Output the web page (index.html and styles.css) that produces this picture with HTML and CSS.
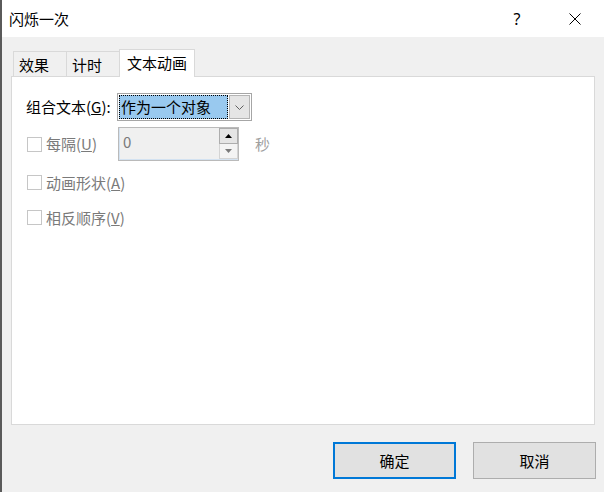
FILE: index.html
```html
<!DOCTYPE html>
<html lang="zh-CN">
<head>
<meta charset="utf-8">
<title>闪烁一次</title>
<link rel="stylesheet" href="styles.css">
</head>
<body>
<div class="window">
  <div class="titlebar">
    <div class="title">闪烁一次</div>
    <div class="cap-btn help">?</div>
    <div class="cap-btn close">
      <svg width="12" height="12" viewBox="0 0 12 12"><path d="M0.5 0.5 L11.5 11.5 M11.5 0.5 L0.5 11.5" stroke="#000" stroke-width="1" fill="none"/></svg>
    </div>
  </div>
  <div class="content">
    <div class="tabs">
      <div class="tab tab-1">效果</div>
      <div class="tab tab-2">计时</div>
      <div class="tab active">文本动画</div>
    </div>
    <div class="panel">
      <div class="row group-row">
        <div class="field-label">组合文本(<u>G</u>):</div>
        <div class="combo">
          <div class="combo-value">作为一个对象</div>
          <div class="combo-btn">
            <svg width="9" height="5" viewBox="0 0 9 5"><polyline points="0.5,0.5 4.5,4.5 8.5,0.5" stroke="#606060" stroke-width="1" fill="none"/></svg>
          </div>
        </div>
      </div>
      <div class="row spin-row">
        <div class="check-wrap fixed">
          <span class="checkbox"></span><span class="check-label">每隔(<u>U</u>)</span>
        </div>
        <div class="spin">
          <div class="spin-text">0</div>
          <div class="spin-btns">
            <div class="spin-up"><svg width="7" height="4" viewBox="0 0 7 4"><polygon points="0,4 7,4 3.5,0" fill="#000"/></svg></div>
            <div class="spin-down"><svg width="7" height="4" viewBox="0 0 7 4"><polygon points="0,0 7,0 3.5,4" fill="#7a7a7a"/></svg></div>
          </div>
        </div>
        <span class="unit">秒</span>
      </div>
      <div class="row check-row first">
        <div class="check-wrap">
          <span class="checkbox"></span><span class="check-label">动画形状(<u>A</u>)</span>
        </div>
      </div>
      <div class="row check-row second">
        <div class="check-wrap">
          <span class="checkbox"></span><span class="check-label">相反顺序(<u>V</u>)</span>
        </div>
      </div>
    </div>
    <div class="buttons">
      <button class="btn primary">确定</button>
      <button class="btn">取消</button>
    </div>
  </div>
</div>
</body>
</html>
```
FILE: styles.css
```css
* { box-sizing: border-box; }
html, body { margin: 0; padding: 0; }
body {
  font-family: "Noto Sans CJK SC", "Noto Sans", sans-serif;
  font-size: 15px;
  line-height: 20px;
  color: #000;
  background: #f0f0f0;
}
.window {
  width: 604px;
  height: 492px;
  border-left: 2px solid #5a5a5a;
  background: #f0f0f0;
  display: flex;
  flex-direction: column;
  overflow: hidden;
}
.titlebar {
  height: 37px;
  flex: 0 0 37px;
  background: #fff;
  display: flex;
  align-items: center;
}
.title {
  flex: 1;
  padding-left: 7px;
}
.cap-btn {
  width: 58px;
  height: 37px;
  display: flex;
  align-items: center;
  justify-content: center;
}
.help {
  font-family: "Noto Sans", sans-serif;
  font-size: 16px;
}
.content {
  padding: 12px 9px 0 9px;
  display: flex;
  flex-direction: column;
}
.tabs {
  height: 27px;
  display: flex;
  align-items: flex-end;
  padding-left: 2px;
}
.tab {
  height: 25px;
  border: 1px solid #d9d9d9;
  border-bottom: none;
  background: #f0f0f0;
  padding-left: 5px;
  line-height: 25px;
  width: 54px;
}
.tab + .tab { margin-left: -1px; }
.tab.active {
  width: 76px;
  height: 28px;
  margin-bottom: -1px;
  background: #fff;
  position: relative;
  z-index: 1;
  padding-left: 7px;
  line-height: 26px;
}
.panel {
  height: 349px;
  border: 1px solid #d9d9d9;
  background: #fff;
  padding: 16px 0 0 14px;
  display: flex;
  flex-direction: column;
}
.row {
  display: flex;
  align-items: center;
}
.group-row { height: 28px; }
.field-label { width: 91px; }
.combo {
  width: 135px;
  height: 28px;
  border: 1px solid #a6a6a6;
  padding: 1px;
  display: flex;
  gap: 1px;
}
.combo-value {
  flex: 1;
  background: #99c9ef;
  border: 1px dotted #000;
  padding-left: 1px;
  line-height: 22px;
}
.combo-btn {
  width: 21px;
  border: 1px solid #b4b4b4;
  background: #e5e5e5;
  display: flex;
  align-items: center;
  justify-content: center;
}
.spin-row {
  margin-top: 6px;
  height: 34px;
}
.check-wrap {
  display: flex;
  align-items: center;
  padding-left: 1px;
}
.check-wrap.fixed { width: 92px; }
.checkbox {
  width: 15px;
  height: 15px;
  border: 1px solid #c6c6c6;
  background: #fff;
  margin-right: 4px;
  flex: 0 0 15px;
}
.check-label { color: #7a7a7a; }
.spin {
  width: 121px;
  height: 34px;
  border: 1px solid #bababa;
  background: #f0f0f0;
  box-shadow: inset 1px 0 0 #d3e2f1, inset 0 -1px 0 #d3e2f1;
  display: flex;
}
.spin-text {
  flex: 1;
  padding: 4px 0 0 4px;
  color: #7a7a7a;
}
.spin-btns {
  width: 19px;
  display: flex;
  flex-direction: column;
  padding: 0 0 1px 0;
}
.spin-up, .spin-down {
  flex: 1;
  display: flex;
  align-items: center;
  justify-content: center;
}
.spin-up {
  border: 1px solid #adadad;
  background: #e5e5e5;
}
.spin-down {
  border: 1px solid #d4d4d4;
  border-top: none;
  background: #f4f4f4;
}
.unit {
  margin-left: 16px;
  color: #a0a0a0;
}
.check-row { height: 21px; }
.check-row.first { margin-top: 11px; }
.check-row.second { margin-top: 14px; }
.buttons {
  margin-top: 17px;
  margin-right: -1px;
  display: flex;
  justify-content: flex-end;
  gap: 17px;
}
.btn {
  width: 123px;
  height: 37px;
  background: #e1e1e1;
  border: 1px solid #adadad;
  font-family: "Noto Sans CJK SC", "Noto Sans", sans-serif;
  font-size: 15px;
  color: #000;
  padding: 0;
  margin: 0;
}
.btn.primary { border: 2px solid #0078d7; }
```
